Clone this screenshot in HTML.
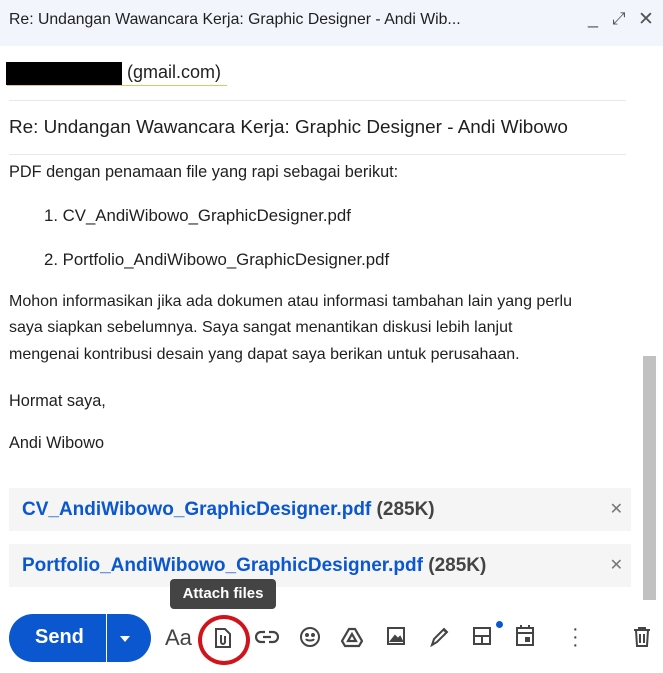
<!DOCTYPE html>
<html><head><meta charset="utf-8"><style>
body{margin:0;width:663px;height:673px;overflow:hidden;background:#fff;font-family:"Liberation Sans",sans-serif;position:relative;color:#222}
.a{position:absolute;white-space:nowrap}
.hdr{left:0;top:0;width:663px;height:46px;background:#f2f6fc}
.t{font-size:16.3px;color:#1f1f1f}
.att{position:absolute;left:9px;width:622px;height:43px;background:#f5f5f5}
.att span{position:absolute;left:13px;top:11px;font-size:19px;font-weight:bold;color:#0b57d0}
.att b{color:#444}
.att i{position:absolute;right:8px;top:11px;font-style:normal;color:#777;font-size:16px}
.ic{position:absolute;top:626px}
</style></head><body>
<div class="a hdr"></div>
<div class="a" style="left:9px;top:11px;font-size:15.8px;color:#1f1f1f">Re: Undangan Wawancara Kerja: Graphic Designer - Andi Wib...</div>
<div class="a" style="left:588px;top:8px;font-size:18px;color:#555">_</div>
<div class="a" style="left:612px;top:9px;font-size:17px;color:#555">⤢</div>
<div class="a" style="left:638px;top:8px;font-size:19px;color:#555">✕</div>
<div class="a" style="left:6px;top:62px;width:116px;height:23px;background:#000"></div>
<div class="a t" style="left:127px;top:62px;font-size:18px">(gmail.com)</div>
<div class="a" style="left:7px;top:85px;width:220px;height:1px;background:#e8c55a"></div>
<div class="a" style="left:9px;top:100px;width:617px;height:1px;background:#e8e8e8"></div>
<div class="a t" style="left:9px;top:117px;font-size:18.9px">Re: Undangan Wawancara Kerja: Graphic Designer - Andi Wibowo</div>
<div class="a" style="left:9px;top:154px;width:617px;height:1px;background:#e8e8e8"></div>
<div class="a t" style="left:9px;top:163px">PDF dengan penamaan file yang rapi sebagai berikut:</div>
<div class="a t" style="left:44px;top:206px;font-size:16.8px">1. CV_AndiWibowo_GraphicDesigner.pdf</div>
<div class="a t" style="left:44px;top:250px;font-size:16.8px">2. Portfolio_AndiWibowo_GraphicDesigner.pdf</div>
<div class="a t" style="left:9px;top:293px;font-size:16px">Mohon informasikan jika ada dokumen atau informasi tambahan lain yang perlu</div>
<div class="a t" style="left:9px;top:319px;font-size:16px">saya siapkan sebelumnya. Saya sangat menantikan diskusi lebih lanjut</div>
<div class="a t" style="left:9px;top:346px;font-size:16px">mengenai kontribusi desain yang dapat saya berikan untuk perusahaan.</div>
<div class="a t" style="left:9px;top:392px">Hormat saya,</div>
<div class="a t" style="left:9px;top:434px">Andi Wibowo</div>
<div class="a" style="left:643px;top:356px;width:13px;height:244px;background:#c1c1c1"></div>
<div class="att" style="top:488px"><span>CV_AndiWibowo_GraphicDesigner.pdf <b>(285K)</b></span><i>✕</i></div>
<div class="att" style="top:544px"><span>Portfolio_AndiWibowo_GraphicDesigner.pdf <b>(285K)</b></span><i>✕</i></div>
<div class="a" style="left:170px;top:579px;width:106px;height:30px;background:#444;border-radius:4px;color:#fff;font-size:15px;font-weight:bold;text-align:center;line-height:30px">Attach files</div>
<div class="a" style="left:9px;top:614px;width:142px;height:48px;background:#0b57d0;border-radius:24px"></div>
<div class="a" style="left:106px;top:614px;width:1px;height:48px;background:#fff"></div>
<div class="a" style="left:35px;top:626px;color:#fff;font-size:20px;font-weight:bold">Send</div>
<div class="a" style="left:120px;top:636px;width:0;height:0;border-left:5px solid transparent;border-right:5px solid transparent;border-top:6px solid #fff"></div>
<div class="a" style="left:165px;top:625px;font-size:22px;color:#444">Aa</div>
<div class="a" style="left:198px;top:615px;width:44px;height:42px;border:4px solid #d0141c;border-radius:50%"></div>
<svg class="ic" style="left:212px;top:627px" width="22" height="22" viewBox="0 0 22 22" fill="none" stroke="#444" stroke-width="2"><path d="M4 2h9l5 5v13H4z"/><path d="M9 8v7a2 2 0 0 0 4 0V9"/></svg>
<svg class="ic" style="left:255px" width="24" height="22" viewBox="0 0 24 22" fill="none" stroke="#444" stroke-width="2.2"><path d="M10 6H6a5 5 0 0 0 0 10h4M14 6h4a5 5 0 0 1 0 10h-4M8 11h8"/></svg>
<svg class="ic" style="left:299px" width="22" height="22" viewBox="0 0 22 22" fill="none" stroke="#444" stroke-width="2"><circle cx="11" cy="11" r="9"/><path d="M7 13c1 2 7 2 8 0"/><circle cx="8" cy="9" r="1" fill="#444"/><circle cx="14" cy="9" r="1" fill="#444"/></svg>
<svg class="ic" style="left:341px" width="22" height="22" viewBox="0 0 22 22" fill="none" stroke="#444" stroke-width="2.2"><path d="M8 3h6l7 12-3 5H4l-3-5z M11 8l4 7H7z"/></svg>
<svg class="ic" style="left:386px" width="20" height="20" viewBox="0 0 20 20" fill="none" stroke="#444" stroke-width="2"><rect x="2" y="2" width="16" height="16"/><path d="M5 15l4-5 3 3 2-2 2 4z" fill="#444"/></svg>
<svg class="ic" style="left:428px" width="22" height="22" viewBox="0 0 22 22" fill="none" stroke="#444" stroke-width="2"><path d="M4 19l2-6 10-10 3 3-10 10zM15 3l4 4"/></svg>
<svg class="ic" style="left:472px" width="20" height="20" viewBox="0 0 20 20" fill="none" stroke="#444" stroke-width="2"><rect x="2" y="2" width="16" height="16"/><path d="M2 10h16M10 10v8"/></svg>
<div class="a" style="left:496px;top:621px;width:7px;height:7px;border-radius:50%;background:#0b57d0"></div>
<svg class="ic" style="left:515px;top:624px" width="20" height="23" viewBox="0 0 20 23" fill="none" stroke="#444" stroke-width="2"><rect x="2" y="4" width="16" height="17"/><path d="M2 9h16M6 1v4M14 1v4"/><rect x="11" y="14" width="3" height="3" fill="#444"/></svg>
<div class="a" style="left:572px;top:625px;font-size:20px;color:#444;line-height:8px">·<br>·<br>·</div>
<svg class="ic" style="left:632px" width="20" height="22" viewBox="0 0 20 22" fill="none" stroke="#444" stroke-width="2"><path d="M2 4h16M7 4V2h6v2M4 4l1 16h10l1-16M8 8v9M12 8v9"/></svg>
</body></html>
